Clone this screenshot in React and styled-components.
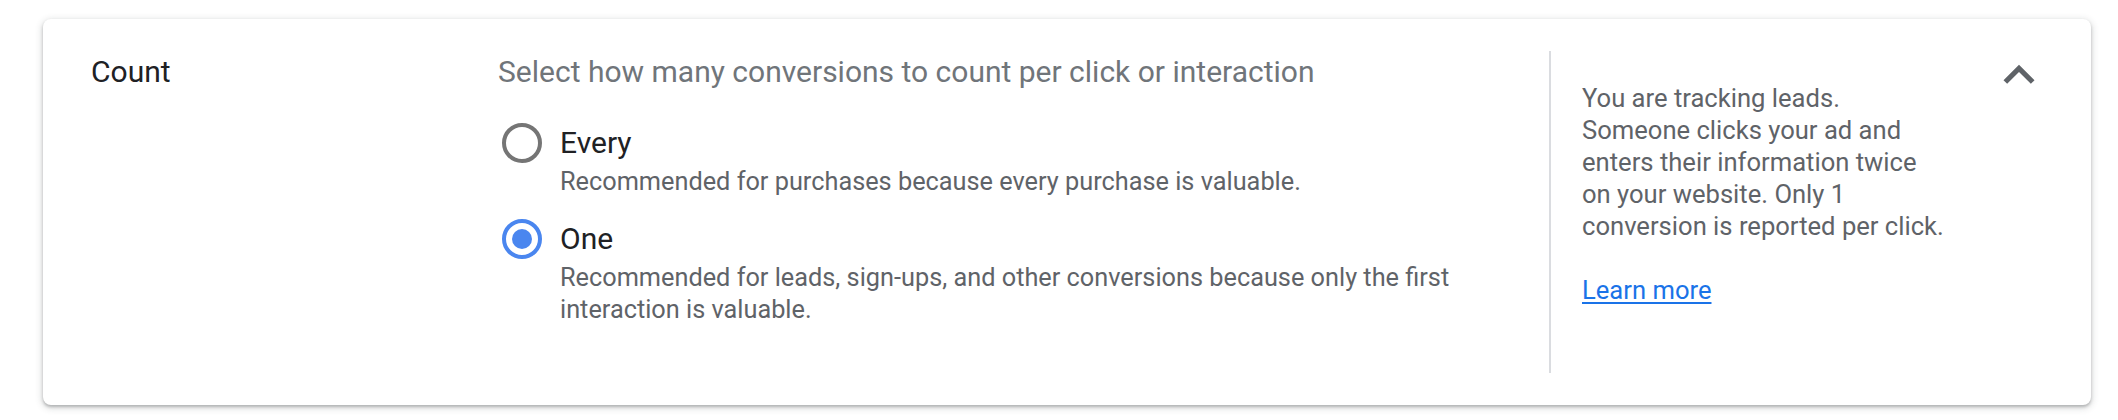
import styled, { createGlobalStyle } from "styled-components";

const GlobalStyle = createGlobalStyle`
  body {
    margin: 0;
    background: #fff;
    font-family: Roboto, "Liberation Sans", Arial, sans-serif;
  }
`;

const Page = styled.div`
  padding: 19px 27px 15px 43px;
`;

const Card = styled.section`
  display: flex;
  align-items: stretch;
  padding: 32px 41px 32px 48px;
  background: #fff;
  border-radius: 8px;
  box-shadow: 0 2px 3px 0 rgba(60, 64, 67, 0.3),
    0 2px 6px 2px rgba(60, 64, 67, 0.15);
  min-height: 322px;
`;

const Label = styled.div`
  width: 405px;
  flex-shrink: 0;
  font-size: 30px;
  line-height: 42px;
  color: #202124;
`;

const Middle = styled.div`
  flex: 1;
  padding-right: 60px;
`;

const Prompt = styled.div`
  font-size: 30px;
  line-height: 42px;
  color: #70757a;
  margin-bottom: 28px;
  padding-left: 2px;
`;

const Option = styled.label`
  display: flex;
  margin-bottom: 19px;
  cursor: pointer;
`;

const RadioBox = styled.span`
  width: 52px;
  height: 44px;
  flex-shrink: 0;
  display: flex;
  align-items: center;
  justify-content: center;
  margin-right: 12px;
`;

const Ring = styled.span`
  box-sizing: border-box;
  width: 40px;
  height: 40px;
  border-radius: 50%;
  border: 4px solid ${(p) => (p.checked ? "#4a86ef" : "#757575")};
  display: flex;
  align-items: center;
  justify-content: center;

  &::after {
    content: "";
    width: 20px;
    height: 20px;
    border-radius: 50%;
    background: #4a86ef;
    display: ${(p) => (p.checked ? "block" : "none")};
  }
`;

const OptionText = styled.div`
  display: flex;
  flex-direction: column;
`;

const OptionTitle = styled.span`
  font-size: 30px;
  line-height: 44px;
  color: #202124;
`;

const OptionDesc = styled.span`
  font-size: 25.3px;
  line-height: 32px;
  color: #5f6368;
  margin-top: 1px;
`;

const Helper = styled.aside`
  width: 439px;
  flex-shrink: 0;
  box-sizing: border-box;
  border-left: 2px solid #dadce0;
  padding: 31px 0 0 31px;
  font-size: 25.6px;
  line-height: 32px;
  color: #5f6368;
`;

const HelpLink = styled.a`
  display: inline-block;
  margin-top: 32px;
  color: #1a73e8;
  text-decoration: underline;
  text-underline-offset: 3px;
`;

const CollapseButton = styled.button`
  width: 62px;
  height: 62px;
  margin-top: -7px;
  padding: 0;
  border: none;
  background: none;
  cursor: pointer;
  flex-shrink: 0;
  display: flex;
  align-items: center;
  justify-content: center;
`;

const options = [
  {
    id: "every",
    title: "Every",
    desc: "Recommended for purchases because every purchase is valuable.",
  },
  {
    id: "one",
    title: "One",
    desc: "Recommended for leads, sign-ups, and other conversions because only the first interaction is valuable.",
  },
];

export default function App() {
  const selected = "one";

  return (
    <>
      <GlobalStyle />
      <Page>
        <Card>
          <Label>Count</Label>
          <Middle>
            <Prompt>
              Select how many conversions to count per click or interaction
            </Prompt>
            {options.map((o) => (
              <Option key={o.id}>
                <RadioBox>
                  <Ring checked={o.id === selected} />
                </RadioBox>
                <OptionText>
                  <OptionTitle>{o.title}</OptionTitle>
                  <OptionDesc>{o.desc}</OptionDesc>
                </OptionText>
              </Option>
            ))}
          </Middle>
          <Helper>
            You are tracking leads.
            <br />
            Someone clicks your ad and
            <br />
            enters their information twice
            <br />
            on your website. Only 1
            <br />
            conversion is reported per click.
            <br />
            <HelpLink href="#">Learn more</HelpLink>
          </Helper>
          <CollapseButton aria-label="Collapse">
            <svg width="62" height="62" viewBox="0 0 24 24" fill="#5f6368">
              <path d="M12 8l-6 6 1.41 1.41L12 10.83l4.59 4.58L18 14z" />
            </svg>
          </CollapseButton>
        </Card>
      </Page>
    </>
  );
}
